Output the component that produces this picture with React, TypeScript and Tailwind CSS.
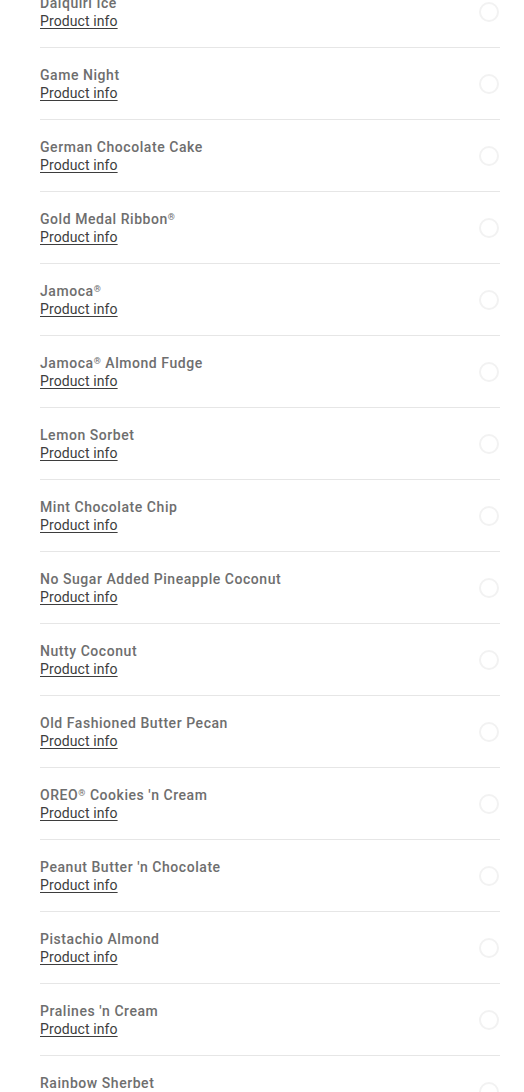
import React from "react";

const items = [
  "Daiquiri Ice",
  "Game Night",
  "German Chocolate Cake",
  "Gold Medal Ribbon®",
  "Jamoca®",
  "Jamoca® Almond Fudge",
  "Lemon Sorbet",
  "Mint Chocolate Chip",
  "No Sugar Added Pineapple Coconut",
  "Nutty Coconut",
  "Old Fashioned Butter Pecan",
  "OREO® Cookies 'n Cream",
  "Peanut Butter 'n Chocolate",
  "Pistachio Almond",
  "Pralines 'n Cream",
  "Rainbow Sherbet",
];

function Name({ text }: { text: string }) {
  const parts = text.split("®");
  return (
    <span>
      {parts.map((p, i) => (
        <React.Fragment key={i}>
          {p}
          {i < parts.length - 1 && <sup className="text-[9px] top-[-0.45em]">®</sup>}
        </React.Fragment>
      ))}
    </span>
  );
}

export default function App() {
  return (
    <div className="h-[1092px] overflow-hidden bg-white" style={{ fontFamily: "Roboto, 'Open Sans', sans-serif" }}>
      <div className="mt-[-24px] pl-10 pr-6">
        {items.map((it) => (
          <div key={it} className="flex items-center justify-between border-b border-[#e6e6e6] pt-[18px] pb-[17px]">
            <div className="flex flex-col">
              <div className="text-[14px] leading-[18px] font-medium tracking-[0.55px] text-[#6e6e6e]">
                <Name text={it} />
              </div>
              <a href="#" className="text-[14px] leading-[18px] text-[#3d3d3d] underline underline-offset-2 tracking-[0.1px]">
                Product info
              </a>
            </div>
            <div className="w-5 h-5 rounded-full border-2 border-[#f2f2f2] mr-[1px]" />
          </div>
        ))}
      </div>
    </div>
  );
}
